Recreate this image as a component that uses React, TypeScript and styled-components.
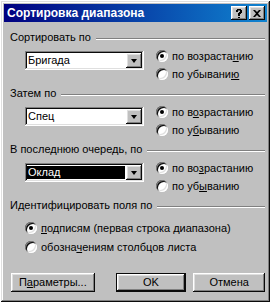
import React from "react";
import styled, { createGlobalStyle } from "styled-components";

const GlobalStyle = createGlobalStyle`
  html, body {
    margin: 0;
    padding: 0;
    background: #ffffff;
  }
  body {
    font-family: "Liberation Sans", Arial, sans-serif;
    font-size: 11px;
    color: #000;
  }
`;

const raised = `
  box-shadow: inset -1px -1px #0a0a0a, inset 1px 1px #ffffff,
    inset -2px -2px #808080, inset 2px 2px #dfdfdf;
`;

const sunken = `
  box-shadow: inset -1px -1px #ffffff, inset 1px 1px #808080,
    inset -2px -2px #dfdfdf, inset 2px 2px #0a0a0a;
`;

const Window = styled.div`
  box-sizing: border-box;
  width: 269px;
  height: 301px;
  margin: 1px 0 0 1px;
  padding: 3px;
  background: #c0c0c0;
  display: flex;
  flex-direction: column;
  box-shadow: inset -1px -1px #0a0a0a, inset 1px 1px #dfdfdf,
    inset -2px -2px #808080, inset 2px 2px #ffffff;
`;

const TitleBar = styled.div`
  height: 18px;
  display: flex;
  align-items: center;
  padding: 0 2px 0 3px;
  background: linear-gradient(90deg, #000080, #1084d0);
`;

const Title = styled.span`
  flex: 1;
  color: #fff;
  font-weight: bold;
  font-size: 12px;
  line-height: 18px;
  white-space: nowrap;
`;

const TitleButton = styled.div`
  box-sizing: border-box;
  width: 16px;
  height: 14px;
  margin-left: 2px;
  background: #c0c0c0;
  display: flex;
  align-items: center;
  justify-content: center;
  ${raised}
`;

const Body = styled.div`
  flex: 1;
  display: flex;
  flex-direction: column;
  padding: 9px 2px 7px 6px;
`;

const Group = styled.div<{ $top: number }>`
  margin-top: ${(p) => p.$top}px;
`;

const GroupHeader = styled.div`
  height: 13px;
  display: flex;
  align-items: center;
  gap: 5px;
  line-height: 13px;
  white-space: nowrap;
`;

const Rule = styled.div`
  flex: 1;
  height: 0;
  margin-top: 3px;
  border-top: 1px solid #808080;
  border-bottom: 1px solid #ffffff;
`;

const GroupBody = styled.div<{ $top: number }>`
  display: flex;
  align-items: flex-start;
  padding-left: 15px;
  margin-top: ${(p) => p.$top}px;
`;

const Combo = styled.div`
  box-sizing: border-box;
  width: 119px;
  height: 19px;
  margin-top: 4px;
  padding: 2px;
  display: flex;
  background: #fff;
  ${sunken}
`;

const ComboText = styled.div<{ $selected?: boolean }>`
  flex: 1;
  margin: 1px 1px 1px 0;
  padding-left: 1px;
  line-height: 13px;
  background: ${(p) => (p.$selected ? "#000" : "transparent")};
  color: ${(p) => (p.$selected ? "#fff" : "#000")};
`;

const ComboArrow = styled.div`
  box-sizing: border-box;
  width: 16px;
  height: 15px;
  background: #c0c0c0;
  display: flex;
  align-items: center;
  justify-content: center;
  ${raised}

  &::after {
    content: "";
    width: 0;
    height: 0;
    margin-top: 1px;
    border-left: 3.5px solid transparent;
    border-right: 3.5px solid transparent;
    border-top: 4px solid #000;
  }
`;

const RadioList = styled.div<{ $left: number }>`
  display: flex;
  flex-direction: column;
  margin-left: ${(p) => p.$left}px;
`;

const RadioRow = styled.div<{ $h: number }>`
  height: ${(p) => p.$h}px;
  display: flex;
  align-items: center;
  gap: 4px;
  white-space: nowrap;
`;

const RadioMark = styled.span<{ $checked?: boolean }>`
  box-sizing: border-box;
  width: 12px;
  height: 12px;
  border-radius: 50%;
  background: #fff;
  display: flex;
  align-items: center;
  justify-content: center;
  box-shadow: inset 1px 1px #808080, inset -1px -1px #ffffff,
    inset 2px 2px #0a0a0a, inset -2px -2px #dfdfdf;

  &::after {
    content: "";
    width: 4px;
    height: 4px;
    border-radius: 50%;
    background: ${(p) => (p.$checked ? "#000" : "transparent")};
  }
`;

const ButtonRow = styled.div`
  margin-top: auto;
  display: flex;
  padding-left: 1px;
`;

const Button = styled.div<{ $w: number; $gap: number; $default?: boolean }>`
  box-sizing: border-box;
  width: ${(p) => p.$w}px;
  height: 19px;
  margin-left: ${(p) => p.$gap}px;
  background: #c0c0c0;
  display: flex;
  align-items: center;
  justify-content: center;
  line-height: 13px;
  ${(p) =>
    p.$default
      ? `box-shadow: inset -2px -2px #0a0a0a, inset 1px 1px #0a0a0a,
          inset 2px 2px #ffffff, inset -3px -3px #808080, inset 3px 3px #dfdfdf;`
      : raised}
`;

type Opt = { label: React.ReactNode; checked?: boolean };

function Radios({ options, left, h }: { options: Opt[]; left: number; h: number }) {
  return (
    <RadioList $left={left}>
      {options.map((o, i) => (
        <RadioRow key={i} $h={h}>
          <RadioMark $checked={o.checked} />
          <span>{o.label}</span>
        </RadioRow>
      ))}
    </RadioList>
  );
}

function SortGroup({
  top,
  title,
  value,
  selected,
  asc,
  desc,
}: {
  top: number;
  title: string;
  value: string;
  selected?: boolean;
  asc: React.ReactNode;
  desc: React.ReactNode;
}) {
  return (
    <Group $top={top}>
      <GroupHeader>
        <span>{title}</span>
        <Rule />
      </GroupHeader>
      <GroupBody $top={3}>
        <Combo>
          <ComboText $selected={selected}>{value}</ComboText>
          <ComboArrow />
        </Combo>
        <Radios
          left={12}
          h={18}
          options={[{ label: asc, checked: true }, { label: desc }]}
        />
      </GroupBody>
    </Group>
  );
}

export default function App() {
  return (
    <>
      <GlobalStyle />
      <Window>
        <TitleBar>
          <Title>Сортировка диапазона</Title>
          <TitleButton>
            <svg width="8" height="9" viewBox="0 0 8 9">
              <path
                d="M1 1h1V0h4v1h1v3H6v1H5v2H3V4h1V3h1V1.5H3V3H1z M3 8h2v1H3z"
                fill="#000"
              />
            </svg>
          </TitleButton>
          <TitleButton>
            <svg width="8" height="7" viewBox="0 0 8 7">
              <path
                d="M0 0h2l2 2 2-2h2L5 3.5 8 7H6L4 5 2 7H0l3-3.5z"
                fill="#000"
              />
            </svg>
          </TitleButton>
        </TitleBar>
        <Body>
          <SortGroup
            top={0}
            title="Сортировать по"
            value="Бригада"
            asc={<>по возраста<u>н</u>ию</>}
            desc={<>по убывани<u>ю</u></>}
          />
          <SortGroup
            top={4}
            title="Затем по"
            value="Спец"
            asc={<>по в<u>о</u>зрастанию</>}
            desc={<>по у<u>б</u>ыванию</>}
          />
          <SortGroup
            top={4}
            title="В последнюю очередь, по"
            value="Оклад"
            selected
            asc={<>по во<u>з</u>растанию</>}
            desc={<>по уб<u>ы</u>ванию</>}
          />
          <Group $top={4}>
            <GroupHeader>
              <span>Идентифицировать поля по</span>
              <Rule />
            </GroupHeader>
            <GroupBody $top={6}>
              <Radios
                left={0}
                h={19}
                options={[
                  {
                    label: (
                      <>
                        <u>п</u>одписям (первая строка диапазона)
                      </>
                    ),
                    checked: true,
                  },
                  { label: <>обозна<u>ч</u>ениям столбцов листа</> },
                ]}
              />
            </GroupBody>
          </Group>
          <ButtonRow>
            <Button $w={84} $gap={0}>
              <span>
                П<u>а</u>раметры...
              </span>
            </Button>
            <Button $w={71} $gap={21} $default>
              OK
            </Button>
            <Button $w={72} $gap={7}>
              Отмена
            </Button>
          </ButtonRow>
        </Body>
      </Window>
    </>
  );
}
